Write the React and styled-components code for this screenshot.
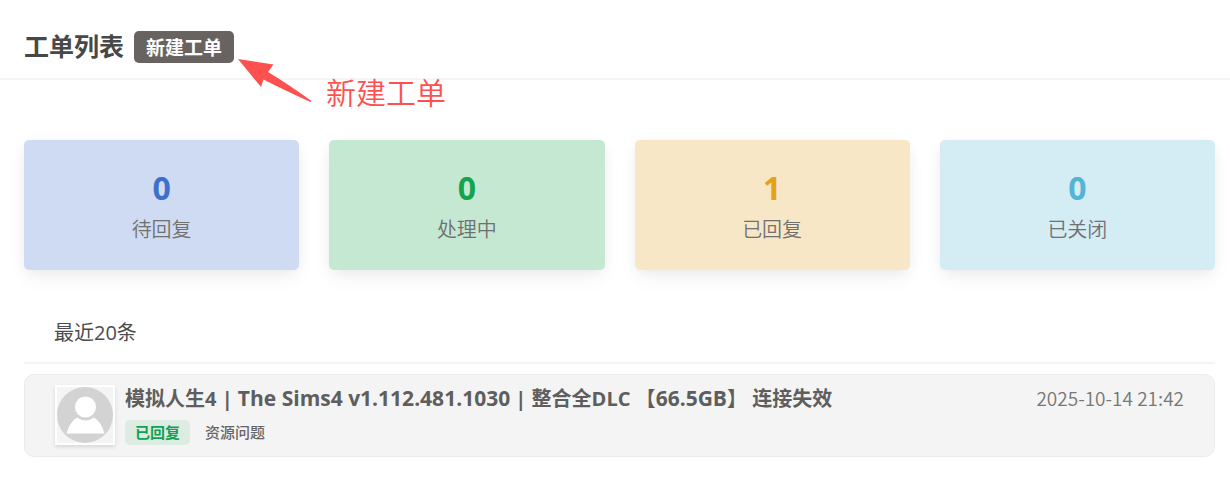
import styled, { createGlobalStyle } from 'styled-components'
import React from 'react'

const GlobalStyle = createGlobalStyle`
  * {
    box-sizing: border-box;
  }
  body {
    margin: 0;
    background: white;
    color: #444;
    font-family: "Open Sans", "Noto Sans CJK SC", sans-serif;
  }
`;

const Header = styled.header`
  position: relative;
  display: flex;
  align-items: center;
  gap: 10px;
  padding: 16px 24px 0;
  height: 80px;
  border-bottom: 2px solid #f5f5f5;
`;

const Title = styled.h1`
  margin: 0;
  font-size: 25px;
  line-height: 30px;
  padding-bottom: 2px;
  font-weight: bold;
  color: #484848;
`;

const NewButton = styled.button`
  height: 32px;
  padding: 0 12px;
  border: none;
  border-radius: 5px;
  background: #686360;
  color: white;
  font-family: inherit;
  font-size: 19px;
  line-height: 34px;
  font-weight: bold;
  cursor: pointer;
`;

const Hint = styled.div`
  position: absolute;
  top: 57px;
  left: 236px;
  display: flex;
  gap: 13px;
  color: #ff5050;
  font-family: "Noto Sans CJK SC", sans-serif;
  font-size: 30px;
  line-height: 40px;
  font-weight: 350;
  pointer-events: none;
`;

const HintText = styled.span`
  padding-top: 14px;
`;

const Main = styled.main`
  padding: 60px 15px 0 24px;
`;

const Stats = styled.section`
  display: grid;
  grid-template-columns: repeat(4, 1fr);
  gap: 30px;
`;

const Stat = styled.div`
  padding: 26px 0 22px;
  border-radius: 5px;
  background: ${(props) => props.$background};
  box-shadow: 0 2px 15px -3px rgba(0, 0, 0, 0.07), 0 10px 20px -2px rgba(0, 0, 0, 0.05);
  text-align: center;
`;

const StatCount = styled.div`
  font-size: 32px;
  line-height: 44px;
  font-weight: bold;
  color: ${(props) => props.$color};
`;

const StatLabel = styled.div`
  font-family: "Noto Sans CJK SC", sans-serif;
  font-size: 20px;
  line-height: 38px;
  font-weight: 350;
  color: #707070;
`;

const ListTitle = styled.h2`
  margin: 32px 0 10px;
  padding: 15px 30px 13px;
  border-bottom: 2px solid #f4f4f4;
  font-size: 20px;
  line-height: 32px;
  font-weight: 400;
  color: #4c4c4c;
`;

const Ticket = styled.article`
  display: flex;
  gap: 10px;
  padding: 10px 30px 11px;
  border: 1px solid #ebebeb;
  border-radius: 10px;
  background: #f4f4f4;
`;

const Avatar = styled.svg`
  flex: none;
  width: 60px;
  height: 60px;
  border: 2px solid white;
  box-shadow: 0 2px 4px rgba(0, 0, 0, 0.12);
`;

const TicketBody = styled.div`
  flex: 1;
  min-width: 0;
`;

const TicketTitle = styled.a`
  display: block;
  font-size: 20px;
  line-height: 26px;
  font-weight: bold;
  color: #5e5e5e;
  text-decoration: none;
`;

const Latin = styled.span`
  font-size: 21px;
`;

const Tags = styled.div`
  display: flex;
  align-items: center;
  gap: 15px;
  margin-top: 8px;
  font-size: 15px;
  line-height: 25px;
  color: #666;
`;

const Status = styled.span`
  padding: 0 10px;
  border-radius: 5px;
  background: #dcece2;
  color: #12a150;
  font-weight: bold;
`;

const Category = styled.span`
  font-weight: 500;
`;

const Time = styled.time`
  font-family: "Noto Sans CJK SC", sans-serif;
  font-size: 19px;
  line-height: 26px;
  font-weight: 350;
  color: #777;
`;

const stats = [
  { label: '待回复', count: 0, color: '#3b71ca', background: '#cfdbf3' },
  { label: '处理中', count: 0, color: '#14a44d', background: '#c5e8d3' },
  { label: '已回复', count: 1, color: '#e4a11b', background: '#f8e7c7' },
  { label: '已关闭', count: 0, color: '#54b4d3', background: '#d4ecf4' },
];

const App = () => {
  return (
    <>
      <GlobalStyle />
      <Header>
        <Title>工单列表</Title>
        <NewButton type="button">新建工单</NewButton>
        <Hint>
          <svg width="77" height="48" viewBox="0 0 77 48" aria-hidden="true">
            <path d="M2 2 L37.500 7.500 L32 15 Q52 27 75.500 44 L74.500 45 Q48 33 27.500 22.500 L25 30 Z" fill="#ff5050" />
          </svg>
          <HintText>新建工单</HintText>
        </Hint>
      </Header>
      <Main>
        <Stats>
          {stats.map((stat) => (
            <Stat key={stat.label} $background={stat.background}>
              <StatCount $color={stat.color}>{stat.count}</StatCount>
              <StatLabel>{stat.label}</StatLabel>
            </Stat>
          ))}
        </Stats>
        <ListTitle>最近20条</ListTitle>
        <Ticket>
          <Avatar viewBox="0 0 56 56" aria-hidden="true">
            <rect width="56" height="56" fill="#f4f4f4" />
            <circle cx="28" cy="28" r="28" fill="#d3d3d3" />
            <circle cx="28.500" cy="20" r="10.500" fill="white" />
            <path d="M9.500 46.500 Q13 34.500 20 30.500 Q28.500 36.500 37 30.500 Q44 34.500 47.500 46.500 Z" fill="white" />
          </Avatar>
          <TicketBody>
            <TicketTitle href="#">
              模拟人生4 | <Latin>The Sims4 v1.112.481.1030</Latin> | 整合全DLC 【<Latin>66.5GB</Latin>】 连接失效
            </TicketTitle>
            <Tags>
              <Status>已回复</Status>
              <Category>资源问题</Category>
            </Tags>
          </TicketBody>
          <Time>2025-10-14 21:42</Time>
        </Ticket>
      </Main>
    </>
  );
};

export default App
